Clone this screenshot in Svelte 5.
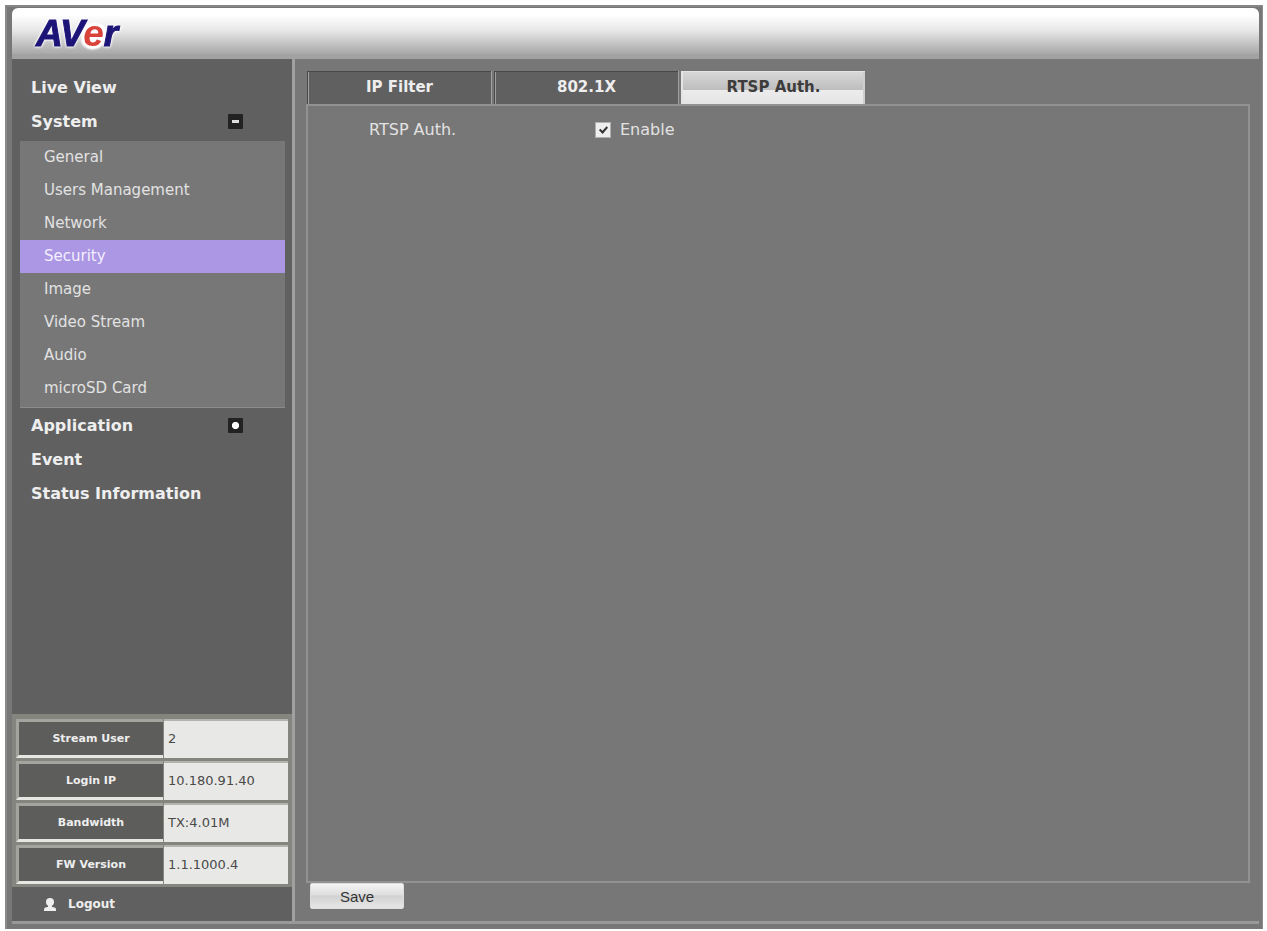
<script>
  const menu = [
    { label: 'Live View' },
    {
      label: 'System',
      items: [
        'General',
        'Users Management',
        'Network',
        'Security',
        'Image',
        'Video Stream',
        'Audio',
        'microSD Card'
      ]
    },
    { label: 'Application', items: [] },
    { label: 'Event' },
    { label: 'Status Information' }
  ]

  const tabs = ['IP Filter', '802.1X', 'RTSP Auth.']

  const info = [
    ['Stream User', '2'],
    ['Login IP', '10.180.91.40'],
    ['Bandwidth', 'TX:4.01M'],
    ['FW Version', '1.1.1000.4']
  ]

  let openMenu = $state('System')
  let page = $state('Security')
  let tab = $state('RTSP Auth.')
  let rtspAuth = $state(true)

  function toggle(label) {
    openMenu = openMenu === label ? '' : label
  }
</script>

<div class="frame">
  <header>
    <svg class="logo" width="110" height="46" viewBox="0 0 110 46">
      <text x="8" y="38">AV<tspan class="e">e</tspan>r</text>
    </svg>
  </header>

  <div class="body">
    <aside>
      <nav>
        {#each menu as entry (entry.label)}
          {#if entry.items}
            <button
              type="button"
              class="entry"
              aria-expanded={openMenu === entry.label}
              onclick={() => toggle(entry.label)}
            >
              <span>{entry.label}</span>
              <svg class="toggle" viewBox="0 0 15 15" width="15" height="15">
                <rect width="15" height="15" rx="1" fill="#222" />
                {#if openMenu === entry.label}
                  <rect x="4" y="6" width="7" height="3" fill="#ddd" />
                {:else}
                  <path d="M6 4h3l2 2v3l-2 2H6L4 9V6z" fill="#fff" />
                {/if}
              </svg>
            </button>
            {#if openMenu === entry.label && entry.items.length}
              <div class="submenu">
                {#each entry.items as item (item)}
                  <a
                    href="#{item}"
                    class:active={item === page}
                    onclick={() => (page = item)}
                  >{item}</a>
                {/each}
              </div>
            {/if}
          {:else}
            <a class="entry" href="#{entry.label}">{entry.label}</a>
          {/if}
        {/each}
      </nav>

      <table class="info">
        <tbody>
          {#each info as [label, value] (label)}
            <tr>
              <th scope="row">{label}</th>
              <td>{value}</td>
            </tr>
          {/each}
        </tbody>
      </table>

      <a class="logout" href="#logout">
        <svg viewBox="0 0 12 13" width="12" height="13" fill="#eee">
          <circle cx="6" cy="4" r="4" />
          <path d="M4 7h4v2H4z" />
          <path d="M0 12c0-3 2-3 6-3s6 0 6 3v1H0z" />
        </svg>
        <span>Logout</span>
      </a>
    </aside>

    <main>
      <div class="tabs" role="tablist">
        {#each tabs as name (name)}
          <button
            type="button"
            role="tab"
            class:selected={name === tab}
            aria-selected={name === tab}
            onclick={() => (tab = name)}
          >{name}</button>
        {/each}
      </div>
      <section class="panel">
        <div class="field">
          <span class="name" id="rtsp-label">RTSP Auth.</span>
          <label>
            <input type="checkbox" aria-describedby="rtsp-label" bind:checked={rtspAuth} />
            Enable
          </label>
        </div>
      </section>
      <button type="button" class="save">Save</button>
    </main>
  </div>
</div>

<style>
  :global(body) {
    background: #fff;
    padding: 5px 4px 2px 5px;
    font-family: 'DejaVu Sans', Verdana, sans-serif;
    font-size: 15px;
    color: #eee;
  }
  .frame {
    display: flex;
    flex-direction: column;
    box-sizing: border-box;
    min-height: calc(100vh - 7px);
    padding: 3px 3px 5px 7px;
    background: #777;
    border: solid #8c8c8c;
    border-width: 0 1px 0 0;
    box-shadow: inset 0 2px #868686, inset 2px 0 #888;
  }
  header {
    height: 46px;
    padding-left: 16px;
    background: linear-gradient(#fff 15%, #e6e6e6 50%, #c6c6c6 75%, #a9a9a9);
    border-bottom: 5px solid #a2a2a2;
    border-radius: 6px 6px 0 0;
  }
  .logo {
    display: block;
    filter: drop-shadow(0 0 1px #fff) drop-shadow(0 0 1px #fff);
  }
  .logo text {
    font: italic bold 37px 'Liberation Sans', Arial, sans-serif;
    fill: #1c1477;
    stroke: #1c1477;
  }
  .logo .e {
    fill: #d9433c;
    stroke: #fff;
    stroke-width: 5px;
    paint-order: stroke;
  }
  .body {
    flex: 1;
    display: flex;
    border-bottom: 3px solid #999;
  }
  aside {
    display: flex;
    flex-direction: column;
    flex: none;
    width: 280px;
    background: #606060;
    border-right: 3px solid #a0a0a0;
  }
  nav {
    flex: 1;
    padding: 11px 7px 0 8px;
  }
  .entry {
    display: flex;
    align-items: center;
    justify-content: space-between;
    box-sizing: border-box;
    width: 100%;
    height: 34px;
    padding: 0 42px 0 11px;
    background: none;
    border: none;
    color: #eee;
    font: bold 16px 'DejaVu Sans', Verdana, sans-serif;
    text-align: left;
    text-decoration: none;
    cursor: pointer;
  }
  .submenu {
    margin-top: 3px;
    padding-bottom: 2px;
    background: #777;
    border-bottom: 1px solid #8b8b8b;
  }
  .submenu a {
    display: block;
    padding-left: 24px;
    color: #e2e2e2;
    line-height: 33px;
    text-decoration: none;
  }
  .submenu a.active {
    background: #ab97e3;
    color: #f4efff;
  }
  .info {
    width: 100%;
    padding: 2px 3px 0 3px;
    background: #858580;
    border-spacing: 1px 3px;
    table-layout: fixed;
  }
  th,
  td {
    height: 39px;
    box-sizing: border-box;
    padding: 0;
  }
  th {
    width: 147px;
    background: #5d5d5b;
    border: solid #a4a49e;
    border-width: 3px 0 0 3px;
    border-bottom: 3px solid #e6e6e2;
    font-size: 11px;
    text-align: center;
  }
  td {
    padding: 0 0 2px 4px;
    background: #e8e8e6;
    border-top: 2px solid #b4b4ae;
    color: #4a4a4a;
    font-size: 13px;
  }
  .logout {
    display: flex;
    align-items: center;
    gap: 12px;
    height: 34px;
    padding-left: 32px;
    color: #eee;
    font-size: 12px;
    font-weight: bold;
    text-decoration: none;
  }
  main {
    flex: 1;
    display: flex;
    flex-direction: column;
    min-width: 0;
    padding: 12px 9px 12px 11px;
    background: #777;
  }
  .tabs {
    display: flex;
    gap: 3px;
    padding-left: 1px;
  }
  .tabs button {
    width: 184px;
    height: 33px;
    padding: 0 0 2px;
    background: #606060;
    border: solid #484848;
    border-width: 1px 0 0 1px;
    box-shadow: inset 1px 0 #a0a0a0, 1px 0 #a0a0a0;
    color: #eee;
    font: bold 15px 'DejaVu Sans', Verdana, sans-serif;
    cursor: pointer;
  }
  .tabs button.selected {
    background: linear-gradient(#d8d8d8, #bebebe 55%, #ececec 56%, #e4e4e4);
    border-color: #e4e4e4;
    box-shadow: inset 1px 0 #e4e4e4, inset -2px 0 #cfcfcf;
    color: #3c3c3c;
  }
  .panel {
    flex: 1;
    border: 2px solid #929292;
    padding: 14px 0 0 61px;
  }
  .field {
    display: flex;
    align-items: center;
    color: #e2e2e2;
    font-size: 16px;
  }
  .name {
    width: 226px;
  }
  label {
    display: flex;
    align-items: center;
    gap: 9px;
  }
  input {
    appearance: none;
    width: 16px;
    height: 16px;
    margin: 0;
    background: #eee;
    border: 1px solid #b0b0b0;
  }
  input:checked::after {
    content: '';
    display: block;
    width: 3px;
    height: 6px;
    margin: 2px 0 0 5px;
    border: solid #333;
    border-width: 0 2px 2px 0;
    transform: rotate(42deg);
  }
  .save {
    align-self: flex-start;
    width: 94px;
    height: 26px;
    margin-left: 4px;
    background: linear-gradient(#f4f4f4, #dedede 45%, #d2d2d2 50%, #e6e6e6);
    border: 1px solid #ddd;
    border-radius: 2px;
    color: #333;
    font: 15px 'Liberation Sans', Arial, sans-serif;
    cursor: pointer;
  }
</style>
